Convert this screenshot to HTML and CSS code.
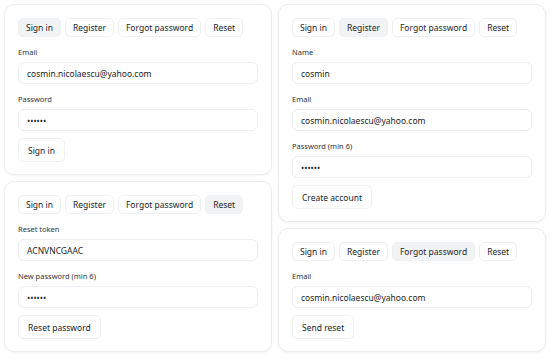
FILE: index.html
```html
<!DOCTYPE html>
<html lang="en">
<head>
    <meta charset="UTF-8">
    <meta name="viewport" content="width=device-width, initial-scale=1.0">
    <title>Auth forms</title>
    <link rel="stylesheet" href="styles.css">
</head>
<body>
    <div class="grid">
        <div class="column">
            <!-- Sign in -->
            <div class="card">
                <div class="tabs">
                    <button class="tab active">Sign in</button>
                    <button class="tab">Register</button>
                    <button class="tab">Forgot password</button>
                    <button class="tab">Reset</button>
                </div>
                <div class="field">
                    <label>Email</label>
                    <input type="text" value="cosmin.nicolaescu@yahoo.com">
                </div>
                <div class="field">
                    <label>Password</label>
                    <input type="password" value="secret">
                </div>
                <button class="submit">Sign in</button>
            </div>

            <!-- Reset -->
            <div class="card">
                <div class="tabs">
                    <button class="tab">Sign in</button>
                    <button class="tab">Register</button>
                    <button class="tab">Forgot password</button>
                    <button class="tab active">Reset</button>
                </div>
                <div class="field">
                    <label>Reset token</label>
                    <input type="text" value="ACNVNCGAAC">
                </div>
                <div class="field">
                    <label>New password (min 6)</label>
                    <input type="password" value="secret">
                </div>
                <button class="submit">Reset password</button>
            </div>
        </div>

        <div class="column">
            <!-- Register -->
            <div class="card">
                <div class="tabs">
                    <button class="tab">Sign in</button>
                    <button class="tab active">Register</button>
                    <button class="tab">Forgot password</button>
                    <button class="tab">Reset</button>
                </div>
                <div class="field">
                    <label>Name</label>
                    <input type="text" value="cosmin">
                </div>
                <div class="field">
                    <label>Email</label>
                    <input type="text" value="cosmin.nicolaescu@yahoo.com">
                </div>
                <div class="field">
                    <label>Password (min 6)</label>
                    <input type="password" value="secret">
                </div>
                <button class="submit">Create account</button>
            </div>

            <!-- Forgot password -->
            <div class="card">
                <div class="tabs">
                    <button class="tab">Sign in</button>
                    <button class="tab">Register</button>
                    <button class="tab active">Forgot password</button>
                    <button class="tab">Reset</button>
                </div>
                <div class="field">
                    <label>Email</label>
                    <input type="text" value="cosmin.nicolaescu@yahoo.com">
                </div>
                <button class="submit">Send reset</button>
            </div>
        </div>
    </div>
</body>
</html>
```

FILE: styles.css
```css
body {
    font-family: "Segoe UI", "Noto Sans", "Open Sans", sans-serif;
    background-color: #fff;
    color: #222428;
    margin: 0;
    padding: 0;
}

.grid {
    display: grid;
    grid-template-columns: 1fr 1fr;
    gap: 6px;
    padding: 4px;
    align-items: start;
}

.column {
    display: flex;
    flex-direction: column;
    gap: 6px;
}

.card {
    border: 1px solid #ebecef;
    border-radius: 10px;
    box-shadow: 0 1px 3px rgba(0, 0, 0, 0.05);
    padding: 13px 13px 12px;
    display: flex;
    flex-direction: column;
    align-items: flex-start;
}

.tabs {
    display: flex;
    gap: 4px;
}

button {
    font-family: inherit;
    color: #222428;
    background-color: #fff;
    border: 1px solid #eff0f2;
    border-radius: 5px;
    cursor: pointer;
    margin: 0;
}

.tab {
    height: 19px;
    padding: 0 7px;
    font-size: 8.5px;
}

.tab.active {
    background-color: #f2f3f5;
}

.field {
    margin-top: 10px;
    width: 100%;
}

label {
    display: block;
    font-size: 7.5px;
    line-height: 11px;
    color: #30343a;
    margin-bottom: 4px;
}

input {
    display: block;
    box-sizing: border-box;
    width: 100%;
    height: 22px;
    padding: 0 8px;
    font-family: inherit;
    font-size: 8.5px;
    color: #222428;
    border: 1px solid #eceef1;
    border-radius: 6px;
    outline: none;
    margin: 0;
}

.submit {
    margin-top: 7px;
    height: 24px;
    padding: 0 9px;
    font-size: 8.5px;
}
```
